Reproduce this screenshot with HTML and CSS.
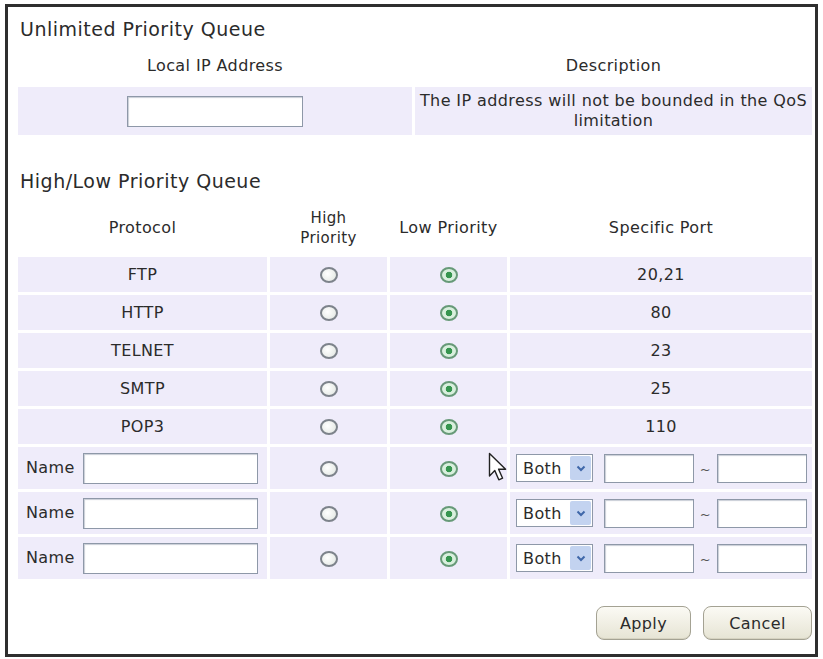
FILE: index.html
```html
<!DOCTYPE html>
<html lang="en">
<head>
<meta charset="UTF-8">
<meta name="viewport" content="width=device-width, initial-scale=1.0">
<title>QoS Priority Queue</title>
<link rel="stylesheet" href="styles.css">
</head>
<body>
<div class="panel">
    <h2 class="section-title">Unlimited Priority Queue</h2>
    <table class="grid unlimited">
        <colgroup>
            <col class="col-ip">
            <col class="col-desc">
        </colgroup>
        <tr class="head-row">
            <th>Local IP Address</th>
            <th>Description</th>
        </tr>
        <tr class="ip-row">
            <td><input type="text" class="text-input ip-input"></td>
            <td class="desc">The IP address will not be bounded in the QoS limitation</td>
        </tr>
    </table>

    <h2 class="section-title second">High/Low Priority Queue</h2>
    <table class="grid priority">
        <colgroup>
            <col class="col-proto">
            <col class="col-high">
            <col class="col-low">
            <col class="col-port">
        </colgroup>
        <tr class="head-row tall">
            <th>Protocol</th>
            <th class="small-head">High<br>Priority</th>
            <th>Low Priority</th>
            <th>Specific Port</th>
        </tr>
        <tr class="proto-row">
            <td>FTP</td>
            <td><input type="radio" class="radio" name="ftp"></td>
            <td><input type="radio" class="radio" name="ftp" checked></td>
            <td>20,21</td>
        </tr>
        <tr class="proto-row">
            <td>HTTP</td>
            <td><input type="radio" class="radio" name="http"></td>
            <td><input type="radio" class="radio" name="http" checked></td>
            <td>80</td>
        </tr>
        <tr class="proto-row">
            <td>TELNET</td>
            <td><input type="radio" class="radio" name="telnet"></td>
            <td><input type="radio" class="radio" name="telnet" checked></td>
            <td>23</td>
        </tr>
        <tr class="proto-row">
            <td>SMTP</td>
            <td><input type="radio" class="radio" name="smtp"></td>
            <td><input type="radio" class="radio" name="smtp" checked></td>
            <td>25</td>
        </tr>
        <tr class="proto-row">
            <td>POP3</td>
            <td><input type="radio" class="radio" name="pop3"></td>
            <td><input type="radio" class="radio" name="pop3" checked></td>
            <td>110</td>
        </tr>
        <tr class="custom-row">
            <td class="name-cell"><span class="name-label">Name</span><input type="text" class="text-input name-input"></td>
            <td><input type="radio" class="radio" name="c1"></td>
            <td><input type="radio" class="radio" name="c1" checked></td>
            <td class="port-cell">
                <div class="port-line">
                    <span class="select-wrap">
                        <select class="port-select"><option>Both</option><option>TCP</option><option>UDP</option></select>
                        <span class="select-arrow"><svg width="10" height="7" viewBox="0 0 10 7"><path d="M1.5 1.5 L5 5 L8.5 1.5" fill="none" stroke="#3f67a9" stroke-width="2"/></svg></span>
                    </span>
                    <input type="text" class="text-input port-input">
                    <span class="tilde">~</span>
                    <input type="text" class="text-input port-input">
                </div>
            </td>
        </tr>
        <tr class="custom-row">
            <td class="name-cell"><span class="name-label">Name</span><input type="text" class="text-input name-input"></td>
            <td><input type="radio" class="radio" name="c2"></td>
            <td><input type="radio" class="radio" name="c2" checked></td>
            <td class="port-cell">
                <div class="port-line">
                    <span class="select-wrap">
                        <select class="port-select"><option>Both</option><option>TCP</option><option>UDP</option></select>
                        <span class="select-arrow"><svg width="10" height="7" viewBox="0 0 10 7"><path d="M1.5 1.5 L5 5 L8.5 1.5" fill="none" stroke="#3f67a9" stroke-width="2"/></svg></span>
                    </span>
                    <input type="text" class="text-input port-input">
                    <span class="tilde">~</span>
                    <input type="text" class="text-input port-input">
                </div>
            </td>
        </tr>
        <tr class="custom-row">
            <td class="name-cell"><span class="name-label">Name</span><input type="text" class="text-input name-input"></td>
            <td><input type="radio" class="radio" name="c3"></td>
            <td><input type="radio" class="radio" name="c3" checked></td>
            <td class="port-cell">
                <div class="port-line">
                    <span class="select-wrap">
                        <select class="port-select"><option>Both</option><option>TCP</option><option>UDP</option></select>
                        <span class="select-arrow"><svg width="10" height="7" viewBox="0 0 10 7"><path d="M1.5 1.5 L5 5 L8.5 1.5" fill="none" stroke="#3f67a9" stroke-width="2"/></svg></span>
                    </span>
                    <input type="text" class="text-input port-input">
                    <span class="tilde">~</span>
                    <input type="text" class="text-input port-input">
                </div>
            </td>
        </tr>
    </table>

    <div class="actions">
        <button class="btn apply">Apply</button>
        <button class="btn cancel">Cancel</button>
    </div>

    <!-- mouse pointer from the screenshot -->
    <svg class="pointer" width="19" height="30" viewBox="0 0 19 30">
        <path d="M1.5 1.5 L1.5 24 L6.8 18.6 L10.8 27.8 L14.6 26.2 L10.6 17.2 L17.6 17.2 Z" fill="#fff" stroke="#222" stroke-width="1.4" stroke-linejoin="round"/>
    </svg>
</div>
</body>
</html>
```

FILE: styles.css
```css
body {
    margin: 0;
    font-family: "DejaVu Sans", sans-serif;
    font-size: 16px;
    letter-spacing: .4px;
    color: #2b2b2b;
    background-color: #fff;
}
.panel {
    position: relative;
    margin: 4px 5px;
    height: 653px;
    box-sizing: border-box;
    border: 3px solid #2e2e2e;
    padding-left: 7px;
}
.section-title {
    margin: 11px 0 4px 5px;
    font-size: 19px;
    line-height: 22px;
    font-weight: normal;
    letter-spacing: .5px;
    color: #2b2b2b;
}
.section-title.second {
    margin-top: 32px;
    margin-bottom: 6px;
}
.grid {
    width: 800px;
    table-layout: fixed;
    border-collapse: separate;
    border-spacing: 3px;
}
.grid th {
    font-weight: normal;
    text-align: center;
    padding: 0;
    line-height: 20px;
}
.grid td {
    background-color: #efecfa;
    text-align: center;
    vertical-align: middle;
    padding: 0;
    line-height: 20px;
}
.col-ip { width: 394px; }
.col-desc { width: 397px; }
.col-proto { width: 249px; }
.col-high { width: 117px; }
.col-low { width: 117px; }
.col-port { width: 302px; }

.unlimited .head-row th {
    height: 37px;
}
.ip-row td {
    height: 48px;
}
.desc {
    line-height: 22px;
}
.priority .head-row th {
    height: 53px;
}
.small-head {
    font-size: 15px;
}
.proto-row td {
    height: 35px;
}
.custom-row td {
    height: 42px;
}

.text-input {
    box-sizing: border-box;
    border: 1px solid #8e98a8;
    box-shadow: inset 1px 1px 1px #c9ced6;
    background-color: #fff;
    margin: 0;
    vertical-align: middle;
}
.ip-input {
    width: 176px;
    height: 31px;
}
.name-cell {
    text-align: left !important;
    padding-left: 8px !important;
}
.name-label {
    display: inline-block;
    width: 57px;
    vertical-align: middle;
}
.name-input {
    width: 175px;
    height: 31px;
}

.radio {
    appearance: none;
    -webkit-appearance: none;
    width: 18px;
    height: 16px;
    margin: 0;
    box-sizing: border-box;
    border: 2px solid #7d838b;
    border-radius: 50%;
    background: radial-gradient(circle at 40% 40%, #ffffff, #dfe4df);
    vertical-align: middle;
}
.radio:checked {
    border-color: #679a78;
    background: radial-gradient(circle, #36954f 0, #36954f 3px, #d8efdd 3.6px);
}

.port-cell {
    padding: 0 5px 0 6px !important;
}
.port-line {
    display: flex;
    align-items: center;
}
.select-wrap {
    position: relative;
    width: 77px;
    height: 28px;
    margin-right: 11px;
}
.port-select {
    appearance: none;
    -webkit-appearance: none;
    width: 100%;
    height: 100%;
    box-sizing: border-box;
    border: 1px solid #8e98a8;
    background-color: #fff;
    padding: 0 0 0 6px;
    font-family: "DejaVu Sans", sans-serif;
    font-size: 16px;
    letter-spacing: .4px;
    color: #2b2b2b;
}
.select-arrow {
    position: absolute;
    top: 2px;
    right: 2px;
    bottom: 2px;
    width: 21px;
    background-color: #c3d3f0;
    border-radius: 2px;
    display: flex;
    align-items: center;
    justify-content: center;
    pointer-events: none;
}
.port-input {
    width: 90px;
    height: 29px;
}
.tilde {
    width: 23px;
    padding-top: 3px;
    text-align: center;
    font-size: 13px;
    color: #555;
}

.actions {
    display: flex;
    justify-content: flex-end;
    gap: 12px;
    margin: 24px 3px 0 0;
}
.btn {
    height: 34px;
    border: 1px solid #a4a293;
    border-radius: 8px;
    background: linear-gradient(#fbfaf4, #e6e4d4);
    box-shadow: inset 0 -1px 0 #d6d3c1;
    font-family: "DejaVu Sans", sans-serif;
    font-size: 16px;
    letter-spacing: .4px;
    color: #2b2b2b;
    cursor: pointer;
}
.apply { width: 95px; }
.cancel { width: 109px; }
.btn:hover {
    background: linear-gradient(#fffef8, #efede0);
}

.pointer {
    position: absolute;
    left: 480px;
    top: 445px;
}
```
